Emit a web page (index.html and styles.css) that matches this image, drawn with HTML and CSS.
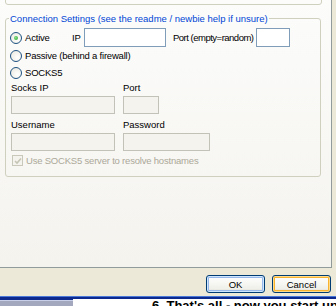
FILE: index.html
```html
<!DOCTYPE html>
<html lang="en">
<head>
    <meta charset="UTF-8">
    <title>Connection Settings</title>
    <link rel="stylesheet" href="styles.css">
</head>
<body>
    <div class="dialog">
        <div class="page">
            <div class="prev"></div>
            <fieldset class="conn">
                <legend>Connection Settings (see the readme / newbie help if unsure)</legend>
                <div class="row first">
                    <label class="opt active"><span class="radio on"></span>Active</label>
                    <span class="lbl ip">IP</span>
                    <input type="text" class="field ipf">
                    <span class="lbl portl">Port (empty=random)</span>
                    <input type="text" class="field portf">
                </div>
                <div class="row">
                    <label class="opt"><span class="radio"></span>Passive (behind a firewall)</label>
                </div>
                <div class="row">
                    <label class="opt"><span class="radio"></span>SOCKS5</label>
                </div>
                <div class="socks">
                    <span class="slbl">Socks IP</span>
                    <span class="slbl">Port</span>
                    <input type="text" class="field off w104" disabled>
                    <input type="text" class="field off w36" disabled>
                    <span class="slbl low">Username</span>
                    <span class="slbl high">Password</span>
                    <input type="text" class="field off w104" disabled>
                    <input type="text" class="field off w87" disabled>
                </div>
                <div class="check">
                    <span class="box">
                        <svg width="8" height="8" viewBox="0 0 8 8"><polyline points="1,4 3,6 7,1.5" fill="none" stroke="#c6c4b4" stroke-width="1.6"/></svg>
                    </span>
                    Use SOCKS5 server to resolve hostnames
                </div>
            </fieldset>
        </div>
        <div class="buttons">
            <button class="btn ok">OK</button>
            <button class="btn cancel">Cancel</button>
        </div>
    </div>
    <div class="frame"></div>
    <div class="below">
        <div class="side"></div>
        <div class="doc">6. That's all - now you start up d</div>
    </div>
</body>
</html>
```

FILE: styles.css
```css
body {
    margin: 0;
    width: 336px;
    height: 306px;
    overflow: hidden;
    font-family: "Liberation Sans", Arial, sans-serif;
    font-size: 9.5px;
    color: #000;
    background-color: #ece9d8;
}
.dialog {
    height: 296px;
    background-color: #ece9d8;
    overflow: hidden;
}
.page {
    height: 267px;
    margin: 0 4px 0 -1px;
    border: 1px solid #919b9c;
    border-top: none;
    background: linear-gradient(#fcfcfb, #f4f3ee);
    overflow: hidden;
}
.prev {
    height: 10px;
    margin: -7px 9px 0 5px;
    border: 1px solid #d0d0bf;
    border-radius: 3px;
}
.conn {
    margin: 8px 10px 0 5px;
    padding: 4px 5px 10px 5px;
    border: 1px solid #d0d0bf;
    border-radius: 3px;
    min-width: 0;
}
.conn legend {
    color: #0046d5;
    padding: 0 1px;
    margin-left: -2px;
    line-height: 11px;
    white-space: nowrap;
}
.row {
    display: flex;
    align-items: center;
    height: 17px;
    white-space: nowrap;
    letter-spacing: -0.2px;
}
.row.first {
    height: 19px;
}
.opt {
    display: flex;
    align-items: center;
    margin-left: -1px;
}
.opt.active {
    width: 62px;
}
.radio {
    width: 10px;
    height: 10px;
    border: 1px solid #1c5180;
    border-radius: 50%;
    margin-right: 3px;
    background: radial-gradient(circle at 65% 65%, #fff 0, #e8e6dc 100%);
    display: flex;
    align-items: center;
    justify-content: center;
}
.radio.on::after {
    content: "";
    width: 4px;
    height: 4px;
    border-radius: 50%;
    background: radial-gradient(circle at 40% 40%, #8ee08e, #21a121);
}
.lbl.ip {
    width: 12px;
}
.lbl.portl {
    margin-left: 7px;
    margin-right: 2px;
    letter-spacing: -0.5px;
}
.field {
    box-sizing: border-box;
    height: 19px;
    padding: 0 2px;
    margin: 0;
    border: 1px solid #7f9db9;
    background: #fff;
    font: inherit;
}
.ipf {
    width: 82px;
}
.portf {
    width: 34px;
}
.field.off {
    height: 18px;
    border-color: #c3c2b8;
    background: #f4f3ee;
}
.w104 { width: 104px; }
.w36 { width: 36px; }
.w87 { width: 87px; }
.socks {
    display: grid;
    grid-template-columns: 112px 1fr;
    grid-template-rows: 12px 18px 15px 18px;
    row-gap: 2px;
    margin-top: 1px;
    justify-items: start;
}
.slbl {
    line-height: 12px;
}
.slbl.low {
    align-self: end;
    margin-top: 3px;
}
.slbl.high {
    align-self: start;
    margin-top: 3px;
}
.check {
    display: flex;
    align-items: center;
    height: 11px;
    margin-top: 4px;
    color: #aca899;
    white-space: nowrap;
    letter-spacing: -0.2px;
}
.box {
    box-sizing: border-box;
    width: 11px;
    height: 11px;
    margin-left: 1px;
    margin-right: 3px;
    border: 1px solid #cac8bb;
    background: #f4f3ee;
    display: flex;
    align-items: center;
    justify-content: center;
}
.buttons {
    display: flex;
    justify-content: flex-end;
    gap: 7px;
    padding-right: 5px;
    margin-top: 7px;
}
.btn {
    box-sizing: border-box;
    width: 59px;
    height: 18px;
    padding: 0;
    border: 1px solid #003c74;
    border-radius: 3px;
    background: linear-gradient(#fff, #f0f0ea 80%, #d6d0c5);
    font: inherit;
    color: #000;
}
.btn.ok {
    box-shadow: inset 0 0 0 1px #cee7ff, inset 0 0 0 2px #98b8ea;
}
.btn.cancel {
    box-shadow: inset 0 0 0 1px #ffdb8c, inset 0 0 0 2px #f8b330;
}
.frame {
    height: 5px;
    background: linear-gradient(#4a78d8 0, #4a78d8 1px, #0c2a8e 1px, #0c2a8e 4px, #c8d0e8 4px);
}
.below {
    display: flex;
    height: 5px;
}
.side {
    width: 73px;
    background-color: #a3a8bf;
}
.doc {
    flex: 1;
    background: #fff;
    padding-left: 79px;
    font-size: 13px;
    font-weight: bold;
    line-height: 13px;
    margin-top: -2px;
    white-space: nowrap;
    overflow: hidden;
}
```
